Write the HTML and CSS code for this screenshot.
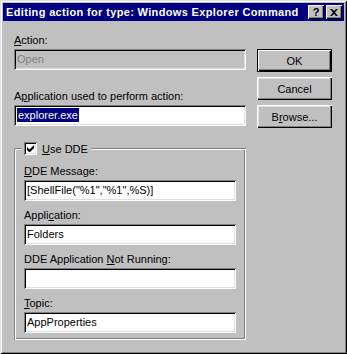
FILE: index.html
```html
<!DOCTYPE html>
<html>
<head>
    <title>Editing action for type</title>
    <link rel="stylesheet" href="styles.css">
</head>
<body>
    <div class="window">
        <div class="titlebar">
            <span class="title">Editing action for type: Windows Explorer Command</span>
            <div class="title-buttons">
                <span class="tbtn">?</span>
                <span class="tbtn">
                    <svg width="8" height="7" viewBox="0 0 8 7"><path d="M0 0h2l2 2 2-2h2L5 3.5 8 7H6L4 5 2 7H0l3-3.5z" fill="#000"/></svg>
                </span>
            </div>
        </div>
        <div class="dialog">
            <div class="main">
                <div class="label"><u>A</u>ction:</div>
                <div class="field disabled">Open</div>
                <div class="label label-gap">A<u>p</u>plication used to perform action:</div>
                <div class="field"><span class="selected">explorer.exe</span></div>

                <div class="group">
                    <div class="legend">
                        <span class="checkbox">
                            <svg width="7" height="7" viewBox="0 0 7 7"><path d="M0 2v3l2 2h1l4-4V0L2.5 4.5z" fill="#000"/></svg>
                        </span>
                        <span><u>U</u>se DDE</span>
                    </div>
                    <div class="label"><u>D</u>DE Message:</div>
                    <div class="field">[ShellFile("%1","%1",%S)]</div>
                    <div class="label">Appli<u>c</u>ation:</div>
                    <div class="field">Folders</div>
                    <div class="label">DDE Application <u>N</u>ot Running:</div>
                    <div class="field"></div>
                    <div class="label"><u>T</u>opic:</div>
                    <div class="field">AppProperties</div>
                </div>
            </div>
            <div class="buttons">
                <div class="button default"><span>OK</span></div>
                <div class="button"><span>Cancel</span></div>
                <div class="button"><span>B<u>r</u>owse...</span></div>
            </div>
        </div>
    </div>
</body>
</html>
```

FILE: styles.css
```css
body {
    margin: 0;
    background-color: #c0c0c0;
    font-family: "Liberation Sans", Arial, sans-serif;
    font-size: 11px;
    color: #000;
}

.window {
    width: 347px;
    height: 354px;
    box-sizing: border-box;
    padding: 3px;
    background-color: #c0c0c0;
    box-shadow: inset 1px 1px 0 #dfdfdf, inset -1px -1px 0 #000,
                inset 2px 2px 0 #fff, inset -2px -2px 0 #808080;
}

.titlebar {
    height: 18px;
    background-color: #000080;
    display: flex;
    align-items: center;
    justify-content: space-between;
    padding: 0 2px 0 3px;
}

.title {
    color: #fff;
    font-weight: bold;
    font-size: 11px;
    letter-spacing: 0.35px;
    white-space: nowrap;
}

.title-buttons {
    display: flex;
    gap: 2px;
}

.tbtn {
    width: 16px;
    height: 14px;
    box-sizing: border-box;
    background-color: #c0c0c0;
    display: flex;
    align-items: center;
    justify-content: center;
    font-weight: bold;
    font-size: 11px;
    box-shadow: inset 1px 1px 0 #fff, inset -1px -1px 0 #000,
                inset -2px -2px 0 #808080;
}

.dialog {
    display: flex;
    padding: 13px 0 0 11px;
}

.main {
    width: 232px;
}

.buttons {
    margin-left: 11px;
    padding-top: 15px;
    display: flex;
    flex-direction: column;
    gap: 5px;
}

.label {
    height: 13px;
    line-height: 13px;
    margin-bottom: 2px;
    white-space: nowrap;
}

.label-gap {
    margin-top: 20px;
}

.field {
    height: 21px;
    box-sizing: border-box;
    background-color: #fff;
    padding: 3px 4px 0 3px;
    line-height: 14px;
    white-space: nowrap;
    box-shadow: inset 1px 1px 0 #808080, inset -1px -1px 0 #fff,
                inset 2px 2px 0 #000, inset -2px -2px 0 #dfdfdf;
}

.field.disabled {
    background-color: #c0c0c0;
    color: #808080;
}

.selected {
    background-color: #000080;
    color: #fff;
    padding: 0 1px;
    display: inline-block;
    line-height: 14px;
}

.group {
    margin-top: 22px;
    position: relative;
    padding: 17px 10px 7px 10px;
    box-shadow: inset 1px 1px 0 #808080, inset -1px -1px 0 #fff,
                inset 2px 2px 0 #fff, inset -2px -2px 0 #808080;
}

.group .field {
    margin-bottom: 8px;
}

.group .field:last-child {
    margin-bottom: 0;
}

.legend {
    position: absolute;
    top: -6px;
    left: 8px;
    display: flex;
    align-items: center;
    gap: 5px;
    padding: 0 3px 0 2px;
    background-color: #c0c0c0;
    height: 13px;
}

.checkbox {
    width: 13px;
    height: 13px;
    box-sizing: border-box;
    background-color: #fff;
    display: flex;
    align-items: center;
    justify-content: center;
    box-shadow: inset 1px 1px 0 #808080, inset -1px -1px 0 #fff,
                inset 2px 2px 0 #000, inset -2px -2px 0 #dfdfdf;
}

.button {
    width: 75px;
    height: 23px;
    box-sizing: border-box;
    background-color: #c0c0c0;
    display: flex;
    align-items: center;
    justify-content: center;
    box-shadow: inset 1px 1px 0 #fff, inset -1px -1px 0 #000,
                inset -2px -2px 0 #808080, inset 2px 2px 0 #dfdfdf;
}

.button.default {
    box-shadow: inset 0 0 0 1px #000, inset 2px 2px 0 #fff,
                inset -2px -2px 0 #000, inset -3px -3px 0 #808080;
}
```
